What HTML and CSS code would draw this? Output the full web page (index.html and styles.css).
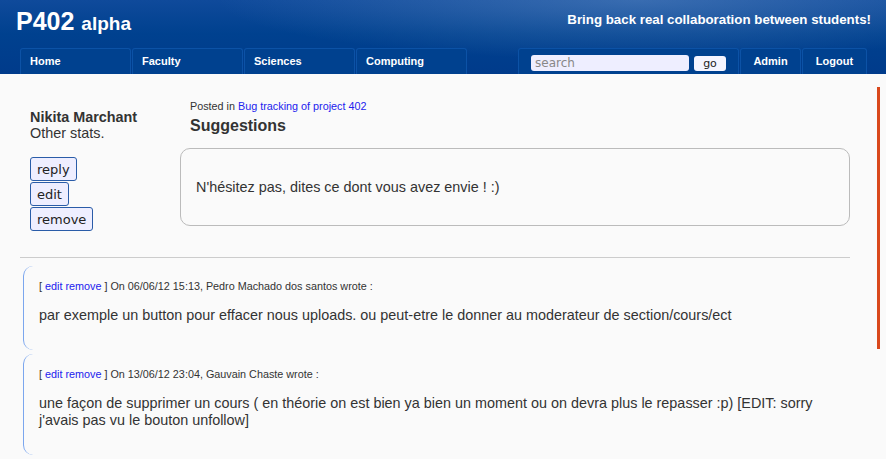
FILE: index.html
```html
<!DOCTYPE html>
<html>
<head>
<meta charset="utf-8">
<title>P402 alpha</title>
<link rel="stylesheet" href="styles.css">
</head>
<body>
<header class="topbar">
  <div class="brand-row">
    <h1 class="brand">P402 <span class="brand-sub">alpha</span></h1>
    <p class="tagline">Bring back real collaboration between students!</p>
  </div>
  <nav class="nav">
    <ul class="tabs">
      <li class="tab wide"><a href="#">Home</a></li>
      <li class="tab wide"><a href="#">Faculty</a></li>
      <li class="tab wide"><a href="#">Sciences</a></li>
      <li class="tab wide"><a href="#">Computing</a></li>
    </ul>
    <ul class="tabs">
      <li class="tab search-tab">
        <input class="search-input" type="text" placeholder="search">
        <button class="go-btn">go</button>
      </li>
      <li class="tab admin-tab"><a href="#">Admin</a></li>
      <li class="tab logout-tab"><a href="#">Logout</a></li>
    </ul>
  </nav>
</header>
<div class="page">
  <main class="main">
    <section class="post">
      <div class="author">
        <div class="author-name">Nikita Marchant</div>
        <div class="author-stats">Other stats.</div>
        <div class="actions">
          <button class="act-btn">reply</button>
          <button class="act-btn">edit</button>
          <button class="act-btn">remove</button>
        </div>
      </div>
      <div class="post-body">
        <div class="post-head">
          <div class="posted-in">Posted in <a href="#">Bug tracking of project 402</a></div>
          <h2 class="post-title">Suggestions</h2>
        </div>
        <div class="post-box">N'hésitez pas, dites ce dont vous avez envie ! :)</div>
      </div>
    </section>
    <hr class="sep">
    <div class="comment">
      <div class="comment-meta">[ <a href="#">edit</a> <a href="#">remove</a> ] On 06/06/12 15:13, Pedro Machado dos santos wrote :</div>
      <div class="comment-text">par exemple un button pour effacer nous uploads. ou peut-etre le donner au moderateur de section/cours/ect</div>
    </div>
    <div class="comment">
      <div class="comment-meta">[ <a href="#">edit</a> <a href="#">remove</a> ] On 13/06/12 23:04, Gauvain Chaste wrote :</div>
      <div class="comment-text">une façon de supprimer un cours ( en théorie on est bien ya bien un moment ou on devra plus le repasser :p) [EDIT: sorry j'avais pas vu le bouton unfollow]</div>
    </div>
  </main>
  <aside class="side-mark"></aside>
</div>
</body>
</html>
```

FILE: styles.css
```css
* { box-sizing: border-box; }
html, body { margin: 0; padding: 0; }
body {
  background: #fafafa;
  color: #333;
  font-family: "Liberation Sans", Arial, sans-serif;
  font-size: 14.4px;
  overflow: hidden;
}
a { color: #2222ee; text-decoration: none; }

.topbar {
  height: 74px;
  background:
    radial-gradient(ellipse 420px 60px at 72% 0, rgba(120,160,210,0.4), rgba(120,160,210,0) 100%),
    linear-gradient(to bottom, #0f4a9b 0%, #00418f 45%, #003b8b 100%);
  display: flex;
  flex-direction: column;
  justify-content: space-between;
}
.brand-row {
  display: flex;
  justify-content: space-between;
  align-items: flex-start;
  padding: 6px 15px 0 16px;
}
.brand {
  margin: 0;
  color: #fff;
  font-size: 25px;
  font-weight: bold;
  line-height: 30px;
}
.brand-sub { font-size: 19px; }
.tagline {
  margin: 6px 0 0;
  color: #fff;
  font-weight: bold;
  font-size: 13.3px;
  line-height: 15px;
}
.nav {
  display: flex;
  justify-content: space-between;
  padding: 0 20px;
}
.tabs {
  list-style: none;
  margin: 0;
  padding: 0;
  display: flex;
  gap: 1px;
}
.tab {
  height: 26px;
  border: 1px solid #0c52a6;
  border-bottom: none;
  border-radius: 3px 3px 0 0;
  background: #00418f;
  display: flex;
  align-items: center;
  justify-content: center;
  padding-bottom: 1px;
}
.tab a {
  color: #fff;
  font-weight: bold;
  font-size: 11px;
}
.tab.wide { width: 111px; padding-left: 9px; justify-content: flex-start; }
.admin-tab { width: 61px; }
.logout-tab { width: 65px; margin-right: -1px; }
.search-tab {
  width: 221px;
  padding: 0 0 0 12px;
  gap: 5px;
  justify-content: flex-start;
}
.search-input {
  width: 158px;
  height: 16px;
  border: none;
  border-radius: 3px;
  background: #eeeeff;
  padding: 0 4px;
  font-family: "DejaVu Sans", sans-serif;
  font-size: 12px;
  color: #333;
  margin-top: 3px;
}
.search-input::placeholder { color: #888; }
.go-btn {
  width: 32px;
  height: 15px;
  border: none;
  border-radius: 3px;
  background: #f4f4ff;
  font-family: "DejaVu Sans", sans-serif;
  font-size: 11px;
  color: #222;
  padding: 0;
  margin-top: 3px;
  line-height: 15px;
}

.page { display: flex; }
.main {
  flex: 1;
  padding: 24px 27px 0 20px;
}
.side-mark {
  width: 3px;
  height: 262px;
  margin: 13px 6px 0 0;
  background: #d9481c;
}

.post { display: flex; }
.author {
  width: 160px;
  padding: 11px 0 0 10px;
}
.author-name { font-weight: bold; line-height: 16px; }
.author-stats { line-height: 16px; }
.actions { margin-top: 16px; }
.act-btn {
  display: block;
  margin-bottom: 1px;
  font-family: "DejaVu Sans", sans-serif;
  font-size: 13px;
  line-height: 15px;
  color: #222;
  background: #eeeeff;
  border: 1px solid #2a5ca8;
  border-radius: 3px;
  padding: 4px 6px 3px;
}
.post-body { flex: 1; }
.post-head { padding-left: 10px; }
.posted-in { font-size: 10.8px; line-height: 13px; padding-top: 2px; }
.post-title {
  margin: 3px 0 0;
  font-size: 16px;
  line-height: 19px;
  font-weight: bold;
}
.post-box {
  margin-top: 13px;
  border: 1px solid #bbb;
  border-radius: 10px;
  padding: 30px 15px 29px 15px;
  line-height: 17px;
}
.sep {
  margin: 25px 0 8px;
  border: none;
  border-top: 1px solid #ccc;
}
.comment {
  margin: 0 0 4px 3px;
  border-left: 1px solid #7ba6ee;
  border-radius: 10px 0 0 10px;
  padding: 14px 15px 26px 15px;
}
.comment-meta {
  font-size: 10.8px;
  line-height: 13px;
  margin-bottom: 14px;
}
.comment-text { line-height: 17px; }
```
